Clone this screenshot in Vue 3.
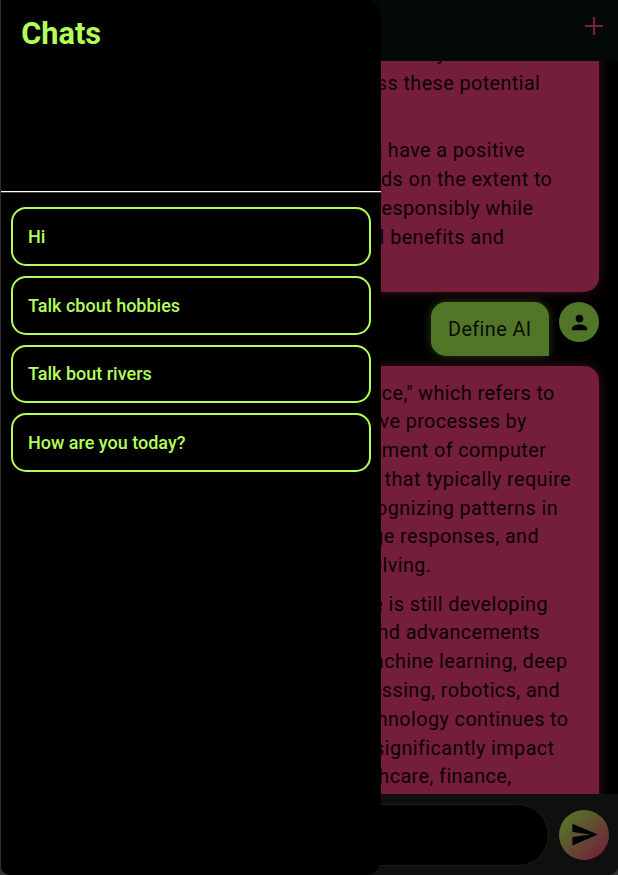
<script setup>
const chats = ['Hi', 'Talk cbout hobbies', 'Talk bout rivers', 'How are you today?']

// Each line carries the x position where its text ends.
const firstReply = [
  [
    { text: 'society', end: 446.5 },
    { text: 'address these potential', end: 540.3 },
  ],
  [],
  [
    { text: 'AI can have a positive', end: 524.8 },
    { text: 'depends on the extent to', end: 552.3 },
    { text: 'responsibly while', end: 533.3 },
    { text: 'potential benefits and', end: 504.3 },
  ],
]
const secondReply = [
  [
    { text: 'intelligence," which refers to', end: 554.8 },
    { text: 'cognitive processes by', end: 526.8 },
    { text: 'development of computer', end: 546.3 },
    { text: 'tasks that typically require', end: 571 },
    { text: 'recognizing patterns in', end: 558 },
    { text: 'language responses, and', end: 539 },
    { text: 'solving.', end: 431.5 },
  ],
  [
    { text: 'intelligence is still developing', end: 548 },
    { text: 'and advancements', end: 540 },
    { text: 'machine learning, deep', end: 567.5 },
    { text: 'processing, robotics, and', end: 560 },
    { text: 'technology continues to', end: 568.5 },
    { text: 'significantly impact', end: 554.5 },
    { text: 'healthcare, finance,', end: 511.5 },
  ],
]
const indent = (end) => ({ paddingRight: `${599 - end}px` })
</script>

<template>
  <div class="screen">
    <header class="topbar">
      <svg width="20" height="20" viewBox="0 0 20 20"><path d="M10 1v18M1 10h18" fill="none" stroke="#7a203e" stroke-width="2.2" /></svg>
    </header>

    <main class="thread">
      <section class="bubble reply first">
        <div v-for="(para, p) in firstReply" :key="p" class="para">
          <p v-for="line in para" :key="line.text" :style="indent(line.end)">{{ line.text }}</p>
        </div>
      </section>
      <div class="mine">
        <div class="bubble question">Define AI</div>
        <div class="avatar">
          <svg width="24" height="24" viewBox="0 0 24 24"><path d="M12 12c2.21 0 4-1.79 4-4s-1.79-4-4-4-4 1.79-4 4 1.79 4 4 4zm0 2c-2.67 0-8 1.34-8 4v2h16v-2c0-2.66-5.33-4-8-4z" /></svg>
        </div>
      </div>
      <section class="bubble reply second">
        <div v-for="(para, p) in secondReply" :key="p" class="para">
          <p v-for="line in para" :key="line.text" :style="indent(line.end)">{{ line.text }}</p>
        </div>
      </section>
    </main>

    <footer class="composer">
      <div class="field"></div>
      <button class="send" aria-label="Send">
        <svg width="29" height="29" viewBox="0 0 24 24"><path d="M2.01 21 23 12 2.01 3 2 10l15 2-15 2z" /></svg>
      </button>
    </footer>

    <aside class="drawer">
      <div class="drawer-head"><h1>Chats</h1></div>
      <nav class="list">
        <div v-for="chat in chats" :key="chat" class="chat">{{ chat }}</div>
      </nav>
    </aside>
  </div>
</template>

<style>
body { background: #333; }
</style>

<style scoped>
.screen {
  position: relative;
  box-sizing: border-box;
  width: 618px;
  height: 875px;
  overflow: hidden;
  display: flex;
  flex-direction: column;
  padding-left: 1px;
  background: #000 linear-gradient(90deg, #303030 1px, transparent 1px);
  border-radius: 0 0 10px 10px;
  font-family: Roboto, sans-serif;
}
.topbar {
  flex: none;
  height: 61px;
  box-sizing: border-box;
  padding: 16px 14px 0 0;
  display: flex;
  justify-content: flex-end;
  align-items: flex-start;
  background: #020908;
}
.thread {
  flex: none;
  height: 733px;
  overflow: hidden;
  display: flex;
  flex-direction: column;
  padding-right: 19px;
}
.bubble {
  color: #0b0206;
  font-size: 19.8px;
  line-height: 28.8px;
  letter-spacing: 0.42px;
}
.reply {
  flex: none;
  box-sizing: border-box;
  background: #741e3a;
  box-shadow: 0 0 12px rgba(116, 30, 58, 0.5);
}
.first {
  height: 251.5px;
  margin-top: -20.5px;
  padding-top: 0.8px;
  border-radius: 0 0 15px 0;
}
.second {
  height: 460px;
  padding-top: 13.5px;
  border-radius: 0 15px 0 0;
}
.para { margin-bottom: 9.6px; }
.first .para:nth-child(2) { height: 19.2px; }
.para p {
  display: flex;
  justify-content: flex-end;
  margin: 0;
  white-space: nowrap;
}
.first .para:first-child p:first-child { margin: -1.8px 0 1.8px; }
.mine {
  flex: none;
  display: flex;
  justify-content: flex-end;
  align-items: flex-start;
  gap: 10px;
  padding: 10px 0;
}
.question {
  box-sizing: border-box;
  width: 118.5px;
  height: 54px;
  padding: 14px 0 0 17.5px;
  white-space: nowrap;
  color: #080c04;
  background: #527628;
  border-radius: 15px 15px 0 15px;
  box-shadow: 0 0 10px rgba(82, 118, 40, 0.5);
}
.avatar {
  width: 40px;
  height: 40px;
  box-sizing: border-box;
  padding: 8.5px;
  border-radius: 50%;
  background: #527628;
}
svg { display: block; }
.avatar svg { width: 23px; height: 23px; }
.composer {
  flex: 1;
  display: flex;
  align-items: flex-start;
  gap: 10px;
  padding: 10px 9px 0 10px;
  background: #0f0f0f;
}
.field {
  flex: 1;
  height: 62px;
  box-sizing: border-box;
  border: 1px solid #192309;
  border-radius: 31px;
  background: #000;
}
.send {
  width: 50px;
  height: 50px;
  margin-top: 5.5px;
  padding: 10.5px;
  border: 0;
  border-radius: 50%;
  background: linear-gradient(135deg, #527628 12%, #741e3a 92%);
}
.drawer {
  position: absolute;
  left: 1px;
  top: 0;
  width: 380px;
  height: 875px;
  background: #000;
  border-radius: 0 16px 16px 10px;
  color: #b2ff59;
}
.drawer-head {
  height: 192px;
  box-sizing: border-box;
  padding: 16px 20.2px 0;
  border-bottom: 1px solid #fff;
  box-shadow: 0 1px #444;
}
h1 {
  margin: 0;
  font-size: 30.7px;
  line-height: 36px;
  font-weight: 700;
}
.list {
  display: flex;
  flex-direction: column;
  gap: 10px;
  padding: 15.2px 10px 0;
}
.chat {
  height: 58.7px;
  box-sizing: border-box;
  display: flex;
  align-items: center;
  padding-left: 15px;
  border: 2px solid #b2ff59;
  border-radius: 15px;
  font-size: 18px;
  font-weight: 500;
}
</style>
